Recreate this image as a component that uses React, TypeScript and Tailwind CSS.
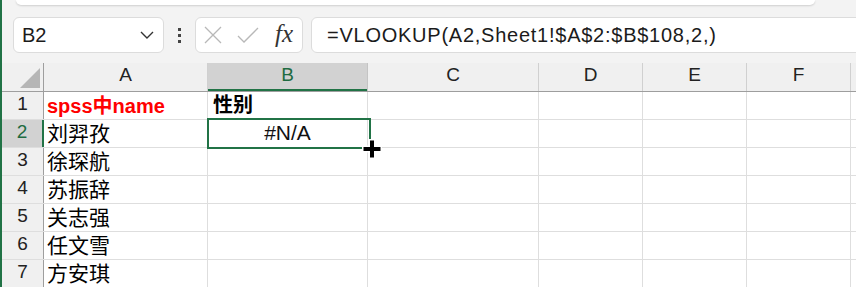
const cols = [
  { name: 'A', w: 'w-[164px]' },
  { name: 'B', w: 'w-[160px]' },
  { name: 'C', w: 'w-[171px]' },
  { name: 'D', w: 'w-[104px]' },
  { name: 'E', w: 'w-[104px]' },
  { name: 'F', w: 'w-[104px]' },
];

const names = ['刘羿孜', '徐琛航', '苏振辞', '关志强', '任文雪', '方安琪'];

const font = { fontFamily: '"Liberation Sans", "Noto Sans CJK SC", sans-serif' };

function FormulaBar() {
  return (
    <div className="bg-[#f3f3f3] h-[63px]">
      <div className="ml-[14px] w-[799px] h-[5px] bg-white rounded-b-[6px] shadow-[0_1px_2px_rgba(0,0,0,0.15)]" />
      <div className="mt-[12px] flex items-center h-[36px]">
        <div className="ml-[11px] w-[151px] h-[36px] bg-white border border-[#dcdcdc] rounded-[6px] flex items-center justify-between pl-[8px] pr-[8px]">
          <span className="text-[20px] text-[#1b1b1b]">B2</span>
          <svg width="16" height="10" viewBox="0 0 16 10">
            <path d="M2 2 L8 8 L14 2" fill="none" stroke="#333" strokeWidth="1.4" />
          </svg>
        </div>
        <div className="ml-[14px] w-[4px] flex flex-col gap-[3px]">
          <div className="w-[3px] h-[3px] bg-[#444]" />
          <div className="w-[3px] h-[3px] bg-[#444]" />
          <div className="w-[3px] h-[3px] bg-[#444]" />
        </div>
        <div className="ml-[13px] w-[108px] h-[36px] bg-white border border-[#dcdcdc] rounded-[6px] flex items-center pl-[8px]">
          <svg width="18" height="18" viewBox="0 0 18 18">
            <path d="M1 1 L17 17 M17 1 L1 17" stroke="#b8b8b8" strokeWidth="1.3" />
          </svg>
          <svg className="ml-[15px]" width="22" height="16" viewBox="0 0 22 16">
            <path d="M1 9 L7 15 L21 1" fill="none" stroke="#b8b8b8" strokeWidth="1.3" />
          </svg>
          <span
            className="ml-[16px] text-[25px] italic text-[#333] leading-none -mt-[3px]"
            style={{ fontFamily: '"Liberation Serif", serif' }}
          >
            fx
          </span>
        </div>
        <div className="ml-[8px] flex-1 -mr-[20px] h-[36px] bg-white border border-[#dcdcdc] rounded-[6px] flex items-center pl-[15px]">
          <span className="text-[20px] text-[#1b1b1b] tracking-[0.75px]">=VLOOKUP(A2,Sheet1!$A$2:$B$108,2,)</span>
        </div>
      </div>
    </div>
  );
}

function HeaderRow() {
  return (
    <div className="flex h-[29px] bg-[#f0f0f0] border-b border-[#9e9e9e]">
      <div className="w-[42px] border-r border-[#9e9e9e] relative">
        <svg className="absolute right-[3px] bottom-[3px]" width="20" height="20" viewBox="0 0 20 20">
          <path d="M20 0 L20 20 L0 20 Z" fill="#b6b6b6" />
        </svg>
      </div>
      {cols.map((c) => {
        const sel = c.name === 'B';
        return (
          <div
            key={c.name}
            className={`${c.w} shrink-0 flex items-end justify-center pb-[2px] text-[19px] border-r ${
              sel ? 'bg-[#d2d2d2] text-[#1e6b41] border-[#c4c4c4] shadow-[inset_0_-2px_0_#217346]' : 'text-[#222] border-[#d0d0d0]'
            }`}
          >
            {c.name}
          </div>
        );
      })}
      <div className="flex-1" />
    </div>
  );
}

function Row({ n, a, b, first }: { n: number; a: string; b?: string; first?: boolean }) {
  const sel = n === 2;
  return (
    <div className="flex h-[28px] border-b border-[#dedede]">
      <div
        className={`w-[42px] shrink-0 flex items-end justify-center pb-[1px] text-[19px] border-r ${
          sel ? 'bg-[#d2d2d2] text-[#1e6b41] border-[#217346] border-r-2' : 'bg-[#f0f0f0] text-[#222] border-[#9e9e9e]'
        }`}
      >
        {n}
      </div>
      <div
        className={`w-[164px] shrink-0 border-r border-[#dedede] flex items-end pl-[3px] leading-none pb-[3px] ${
          first ? 'text-[#ff0000] font-bold text-[20px]' : 'text-black text-[21px]'
        }`}
      >
        {a}
      </div>
      <div
        className={`w-[160px] shrink-0 border-r border-[#dedede] flex items-end leading-none pb-[4px] ${
          first ? 'pl-[5px] font-bold text-[20px] text-black' : 'justify-center text-[21px] text-[#111]'
        }`}
      >
        {b}
      </div>
      <div className="w-[171px] shrink-0 border-r border-[#dedede]" />
      <div className="w-[104px] shrink-0 border-r border-[#dedede]" />
      <div className="w-[104px] shrink-0 border-r border-[#dedede]" />
      <div className="w-[104px] shrink-0 border-r border-[#dedede]" />
      <div className="flex-1" />
    </div>
  );
}

export default function App() {
  return (
    <div className="w-[856px] h-[287px] overflow-hidden bg-white border-l-2 border-[#217346] relative" style={font}>
      <FormulaBar />
      <HeaderRow />
      <Row n={1} a="spss中name" b="性别" first />
      <Row n={2} a={names[0]} b="#N/A" />
      {names.slice(1).map((name, i) => (
        <Row key={name} n={i + 3} a={name} />
      ))}
      <div className="absolute left-[205px] top-[118px] w-[164px] h-[31px] border-2 border-[#217346] pointer-events-none" />
      <svg className="absolute left-[360px] top-[139px]" width="20" height="20" viewBox="0 0 20 20">
        <rect x="6.5" y="0" width="7" height="20" fill="#fff" />
        <rect x="0" y="6.5" width="20" height="7" fill="#fff" />
        <rect x="8" y="1.5" width="4" height="17" fill="#000" />
        <rect x="1.5" y="8" width="17" height="4" fill="#000" />
      </svg>
    </div>
  );
}
